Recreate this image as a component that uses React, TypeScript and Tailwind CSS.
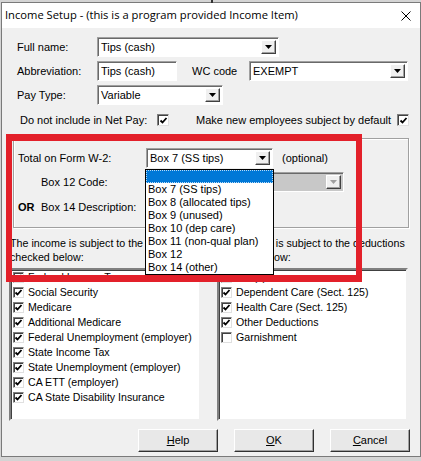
import React from "react";

const sans = "font-['Liberation_Sans',Arial,sans-serif] text-[11px] text-black whitespace-nowrap";

function Arrow({ disabled }: { disabled?: boolean }) {
  return (
    <div className="absolute right-[2px] top-[2px] bottom-[2px] w-[15px] bg-[#f0f0f0] border border-t-white border-l-white border-r-[#404040] border-b-[#404040] shadow-[inset_-1px_-1px_0_#a0a0a0] flex items-center justify-center">
      <svg width="7" height="4" viewBox="0 0 7 4">
        <path d="M0 0 H7 L3.5 4 Z" fill={disabled ? "#a0a0a0" : "#000"} />
      </svg>
    </div>
  );
}

function Combo({ w, value, disabled }: { w: string; value?: string; disabled?: boolean }) {
  return (
    <div
      className={`relative shrink-0 h-[20px] ${w} ${disabled ? "bg-[#c8c8c8]" : "bg-white"} border border-t-[#a0a0a0] border-l-[#a0a0a0] border-b-white border-r-white shadow-[inset_1px_1px_0_#696969] flex items-center pl-[3px] leading-none`}
    >
      {value}
      <Arrow disabled={disabled} />
    </div>
  );
}

function Field({ w, value }: { w: string; value?: string }) {
  return (
    <div className={`shrink-0 h-[20px] ${w} bg-white border border-t-[#a0a0a0] border-l-[#a0a0a0] border-b-white border-r-white shadow-[inset_1px_1px_0_#696969] flex items-center pl-[3px] leading-none`}>
      {value}
    </div>
  );
}

function Check({ on, size = "w-[12px] h-[12px]" }: { on: boolean; size?: string }) {
  return (
    <div className={`${size} shrink-0 bg-white border border-t-[#808080] border-l-[#808080] border-b-[#e0e0e0] border-r-[#e0e0e0] shadow-[inset_1px_1px_0_#404040] flex items-center justify-center`}>
      {on && (
        <svg width="9" height="9" viewBox="0 0 9 9">
          <polyline points="1.5,4.5 3.5,6.5 7.5,2" fill="none" stroke="#000" strokeWidth="1.8" />
        </svg>
      )}
    </div>
  );
}

function ListBox({ items }: { items: [string, boolean][] }) {
  return (
    <div className="h-[153px] overflow-hidden bg-white border-2 border-t-[#808080] border-l-[#808080] border-b-[#f0f0f0] border-r-[#f0f0f0] shadow-[inset_1px_1px_0_#404040] pl-[2px]">
      {items.map(([t, on]) => (
        <div key={t} className="h-[15px] flex items-center gap-[4px]">
          <Check on={on} size="w-[11px] h-[11px]" />
          <span className="text-[10.6px]">{t}</span>
        </div>
      ))}
    </div>
  );
}

function Btn({ label }: { label: string }) {
  return (
    <button className="w-[80px] h-[23px] bg-[#e8e8e8] border border-t-white border-l-white border-r-[#303030] border-b-[#303030] shadow-[inset_-1px_-1px_0_#a0a0a0] leading-none">
      <span className="underline">{label[0]}</span>
      {label.slice(1)}
    </button>
  );
}

const taxes: [string, boolean][] = [
  ["Federal Income Tax", true],
  ["Social Security", true],
  ["Medicare", true],
  ["Additional Medicare", true],
  ["Federal Unemployment (employer)", true],
  ["State Income Tax", true],
  ["State Unemployment (employer)", true],
  ["CA ETT (employer)", true],
  ["CA State Disability Insurance", true],
];

const deductions: [string, boolean][] = [
  ["401(k)", true],
  ["Dependent Care (Sect. 125)", true],
  ["Health Care (Sect. 125)", true],
  ["Other Deductions", true],
  ["Garnishment", false],
];

const w2 = ["Box 7 (SS tips)", "Box 8 (allocated tips)", "Box 9 (unused)", "Box 10 (dep care)", "Box 11 (non-qual plan)", "Box 12", "Box 14 (other)"];

export default function App() {
  return (
    <div className="relative w-[421px] h-[461px] overflow-hidden bg-[#d4d4d4] pt-[2px] pl-[1px]">
      <div className="absolute left-[211px] top-0 w-[2px] h-[3px] bg-[#333]" />
      <div className="w-[420px] h-[455px] border border-[#7a7a7a] bg-[#f0f0f0]">
        {/* title bar */}
        <div className="h-[25px] bg-white flex items-center justify-between pl-[3px] pr-[9px]">
          <span className="font-['Open_Sans',sans-serif] text-[11.2px] text-black">
            Income Setup - (this is a program provided Income Item)
          </span>
          <svg width="10" height="10" viewBox="0 0 10 10">
            <path d="M0.5 0.5 L9.5 9.5 M9.5 0.5 L0.5 9.5" stroke="#000" strokeWidth="1" />
          </svg>
        </div>

        <div className={sans}>
          <div className="mt-[9px] h-[20px] pl-[15px] flex items-center">
            <span className="w-[80px]">Full name:</span>
            <Combo w="w-[182px]" value="Tips (cash)" />
          </div>
          <div className="mt-[4px] h-[20px] pl-[15px] flex items-center">
            <span className="w-[80px]">Abbreviation:</span>
            <Field w="w-[80px]" value="Tips (cash)" />
            <span className="ml-[15px] w-[57px]">WC code</span>
            <Combo w="w-[159px]" value="EXEMPT" />
          </div>
          <div className="mt-[4px] h-[20px] pl-[15px] flex items-center">
            <span className="w-[80px]">Pay Type:</span>
            <Combo w="w-[126px]" value="Variable" />
          </div>
          <div className="mt-[9px] h-[12px] pl-[18px] flex items-center">
            <span className="w-[137px]">Do not include in Net Pay:</span>
            <Check on />
            <span className="ml-[27px] w-[201px]">Make new employees subject by default</span>
            <Check on />
          </div>

          {/* W-2 group */}
          <div className="mt-[12px] ml-[11px] w-[396px] h-[90px] border border-[#a0a0a0] shadow-[inset_1px_1px_0_#fff,1px_1px_0_#fff] pt-[9px] pl-[4px]">
            <div className="h-[20px] flex items-center">
              <span className="w-[128px]">Total on Form W-2:</span>
              <Combo w="w-[127px]" value="Box 7 (SS tips)" />
              <span className="ml-[9px]">(optional)</span>
            </div>
            <div className="mt-[4px] h-[20px] flex items-center">
              <span className="w-[128px] pl-[23px]">Box 12 Code:</span>
              <Combo w="w-[198px]" disabled />
            </div>
            <div className="mt-[5px] h-[20px] flex items-center">
              <span className="w-[23px] font-bold">OR</span>
              <span className="w-[105px]">Box 14 Description:</span>
              <Field w="w-[120px]" />
            </div>
          </div>

          <div className="mt-[8px] flex leading-[14px] text-[10.7px]">
            <div className="ml-[8px] w-[207px]">
              The income is subject to the taxes
              <br />
              checked below:
            </div>
            <div className="w-[195px]">
              The income is subject to the deductions
              <br />
              checked below:
            </div>
          </div>

          <div className="mt-[4px] flex">
            <div className="ml-[7px] w-[192px]">
              <ListBox items={taxes} />
            </div>
            <div className="ml-[16px] w-[191px]">
              <ListBox items={deductions} />
            </div>
          </div>

          <div className="mt-[8px] flex justify-end gap-[16px] pr-[10px]">
            <Btn label="Help" />
            <Btn label="OK" />
            <Btn label="Cancel" />
          </div>
        </div>
      </div>

      {/* open dropdown list */}
      <div className={`absolute left-[145px] top-[169px] w-[129px] h-[106px] bg-white border border-black ${sans}`}>
        <div className="h-[13px] bg-[#0078d7] border border-dotted border-[#b8dcf8]" />
        {w2.map((t) => (
          <div key={t} className="h-[13px] leading-[13px] pl-[2px] text-[11px]">
            {t}
          </div>
        ))}
      </div>

      {/* red highlight */}
      <div className="absolute left-[6px] top-[134px] w-[356px] h-[148px] border-[6px] border-t-[7px] border-b-[7px] border-[#e3202a]" />
    </div>
  );
}
